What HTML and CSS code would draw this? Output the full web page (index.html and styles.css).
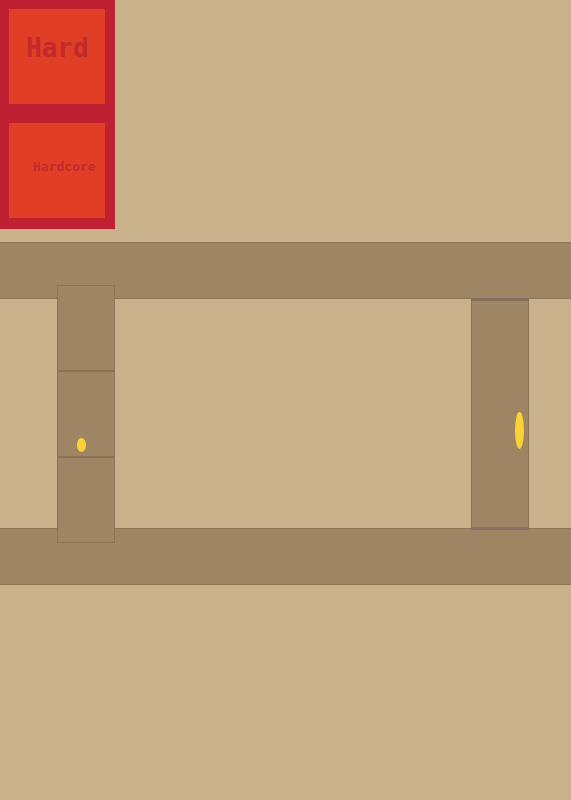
FILE: index.html
```html
<!DOCTYPE html>
<html>
<head>
<meta charset="utf-8">
<link rel="stylesheet" href="styles.css">
</head>
<body>
<div class="stage">
  <div class="menu">
    <div class="btn btn-big">Hard</div>
    <div class="btn btn-small">Hardcore</div>
  </div>
  <div class="bar bar-top"></div>
  <div class="bar bar-bottom"></div>

  <div class="pillar">
    <div class="seg"></div>
    <div class="seg"></div>
    <div class="seg"></div>
  </div>
  <div class="coin coin-small"></div>

  <div class="door"></div>
  <div class="coin coin-tall"></div>
</div>
</body>
</html>
```

FILE: styles.css
```css
html, body {
  margin: 0;
  padding: 0;
  background: #c9b18c;
}
.stage {
  position: relative;
  width: 571px;
  height: 800px;
  overflow: hidden;
  background: #c9b18c;
}
.menu {
  width: 115px;
  height: 229px;
  box-sizing: border-box;
  padding: 9px 10px 10px 9px;
  background: #bf2032;
  display: flex;
  flex-direction: column;
  gap: 19px;
}
.btn {
  width: 96px;
  height: 95px;
  background: #e03f25;
  color: #c22a2e;
  font-family: "DejaVu Sans Mono", monospace;
  font-weight: bold;
  display: flex;
  box-sizing: border-box;
}
.btn-big {
  font-size: 26px;
  padding: 24px 0 0 17px;
}
.btn-small {
  font-size: 13px;
  padding: 36px 0 0 24px;
}
.bar {
  width: 100%;
  height: 57px;
  box-sizing: border-box;
  background: #9e8563;
  border-top: 1px solid #8c7556;
  border-bottom: 1px solid #8c7556;
}
.bar-top {
  margin-top: 13px;
}
.bar-bottom {
  margin-top: 229px;
}
.pillar {
  position: absolute;
  left: 57px;
  top: 285px;
  width: 58px;
  height: 258px;
  display: flex;
  flex-direction: column;
  box-sizing: border-box;
  border: 1px solid #8c7556;
  background: #9e8563;
}
.seg {
  flex: 1;
  border-bottom: 2px solid #8a7253;
}
.seg:last-child {
  border-bottom: none;
}
.door {
  position: absolute;
  left: 471px;
  top: 298px;
  width: 58px;
  height: 232px;
  box-sizing: border-box;
  background: #9e8563;
  border-left: 1px solid #8c7556;
  border-right: 1px solid #8c7556;
  border-top: 3px solid #82705c;
  border-bottom: 3px solid #8b6f66;
}
.coin {
  position: absolute;
  background: #fcd135;
  border-radius: 50%;
}
.coin-small {
  left: 77px;
  top: 438px;
  width: 9px;
  height: 14px;
}
.coin-tall {
  left: 515px;
  top: 412px;
  width: 9px;
  height: 37px;
}
```
